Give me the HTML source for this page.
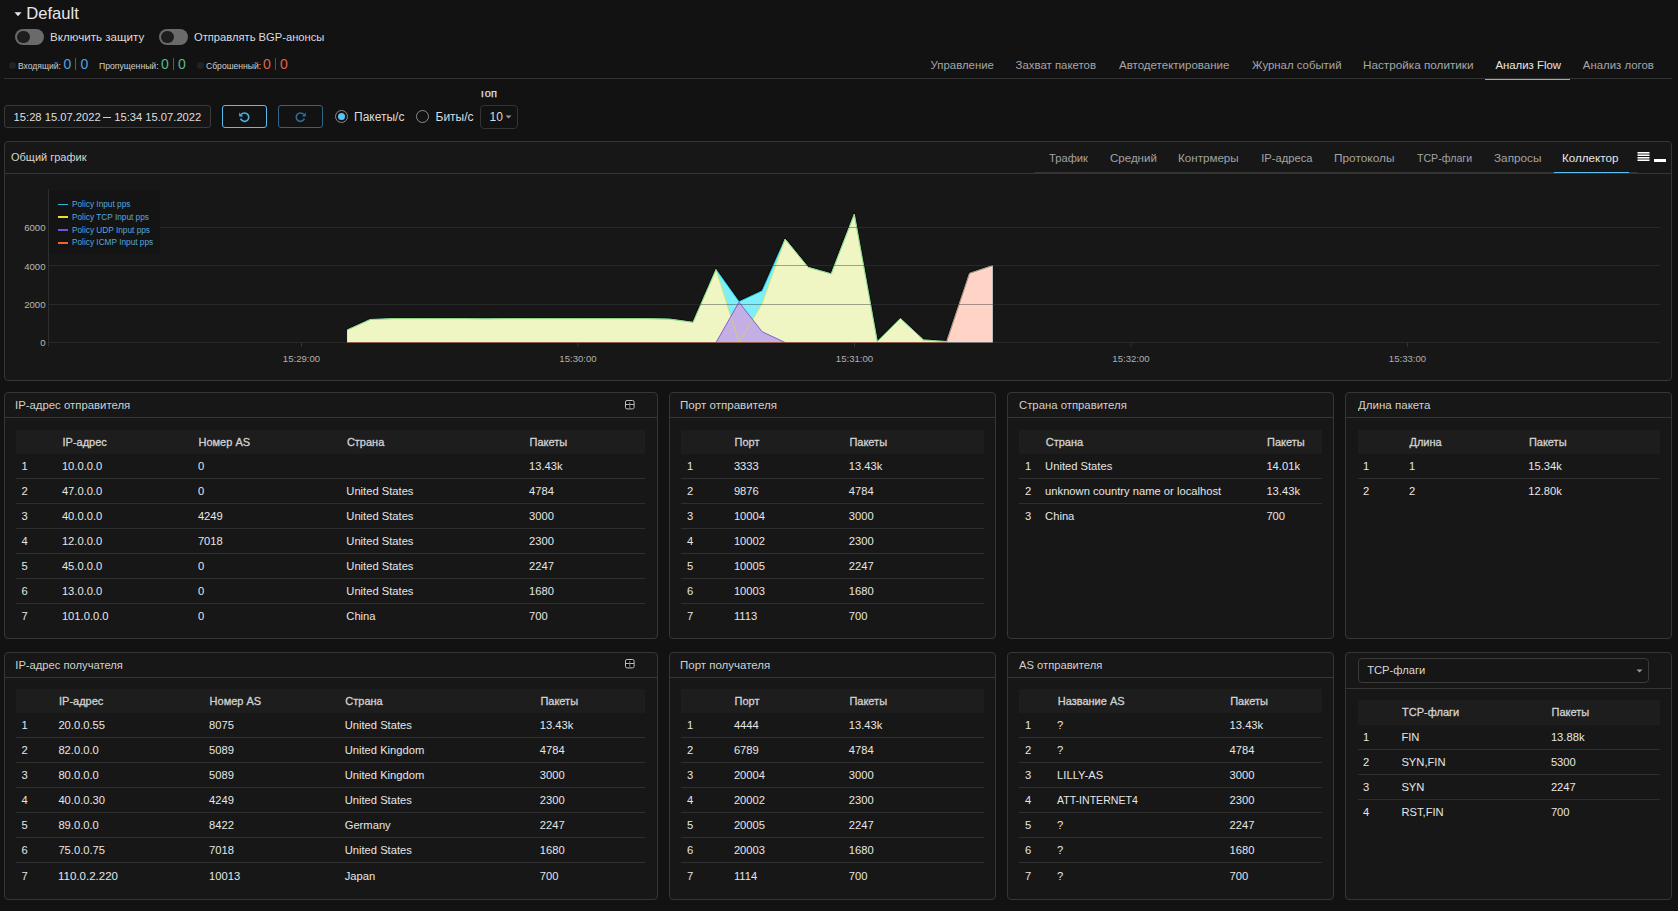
<!DOCTYPE html><html><head><meta charset="utf-8"><style>
html,body{margin:0;padding:0;}
body{width:1678px;height:911px;overflow:hidden;background:#121212;position:relative;font-family:"Liberation Sans",sans-serif;}
.t{position:absolute;white-space:nowrap;line-height:1;}
.r{position:absolute;box-sizing:border-box;}
</style></head><body>
<svg class="r" style="left:14px;top:11px;width:9px;height:7px" viewBox="0 0 9 7"><path d="M0.5 1.2 L7.5 1.2 L4 5.2 Z" fill="#e8e8e8"/></svg>
<div class="t" style="left:26.30px;top:6.21px;font-size:16.6px;color:#e8e8e8;font-weight:normal;">Default</div>
<div class="r" style="left:15px;top:29px;width:29px;height:16px;background:#6a6a6a;border-radius:8px;"></div>
<div class="r" style="left:17px;top:30.7px;width:12.7px;height:12.7px;background:#1e1e1e;border-radius:50%;"></div>
<div class="t" style="left:50.00px;top:31.07px;font-size:11.6px;color:#dcdcdc;font-weight:normal;">Включить защиту</div>
<div class="r" style="left:159px;top:29px;width:29px;height:16px;background:#6a6a6a;border-radius:8px;"></div>
<div class="r" style="left:161px;top:30.7px;width:12.7px;height:12.7px;background:#1e1e1e;border-radius:50%;"></div>
<div class="t" style="left:193.50px;top:31.07px;font-size:11.6px;color:#dcdcdc;font-weight:normal;transform:scaleX(0.9640);transform-origin:0 0;">Отправлять BGP-анонсы</div>
<div class="r" style="left:9px;top:62px;width:7px;height:7px;background:#222;border-radius:50%;"></div>
<div class="t" style="left:18.00px;top:61.03px;font-size:9.6px;color:#cfcfcf;font-weight:normal;transform:scaleX(.89);transform-origin:0 0;">Входящий:</div>
<div class="t" style="left:63.60px;top:57.37px;font-size:14px;color:#49a6e6;font-weight:normal;">0</div>
<div class="r" style="left:75px;top:58px;width:1px;height:12px;background:#3a6585;"></div>
<div class="t" style="left:80.40px;top:57.37px;font-size:14px;color:#49a6e6;font-weight:normal;">0</div>
<div class="t" style="left:99.00px;top:61.03px;font-size:9.6px;color:#cfcfcf;font-weight:normal;transform:scaleX(.9);transform-origin:0 0;">Пропущенный:</div>
<div class="t" style="left:161.00px;top:57.37px;font-size:14px;color:#5cba88;font-weight:normal;">0</div>
<div class="r" style="left:172.5px;top:58px;width:1px;height:12px;background:#3d6e54;"></div>
<div class="t" style="left:178.00px;top:57.37px;font-size:14px;color:#5cba88;font-weight:normal;">0</div>
<div class="r" style="left:197px;top:62px;width:7px;height:7px;background:#222;border-radius:50%;"></div>
<div class="t" style="left:206.00px;top:61.03px;font-size:9.6px;color:#cfcfcf;font-weight:normal;transform:scaleX(.895);transform-origin:0 0;">Сброшенный:</div>
<div class="t" style="left:263.00px;top:57.37px;font-size:14px;color:#e2614c;font-weight:normal;">0</div>
<div class="r" style="left:274.5px;top:58px;width:1px;height:12px;background:#7a4236;"></div>
<div class="t" style="left:280.00px;top:57.37px;font-size:14px;color:#e2614c;font-weight:normal;">0</div>
<div class="r" style="left:4px;top:78px;width:1668px;height:1px;background:#333;"></div>
<div class="t" style="left:930.60px;top:59.53px;font-size:11.4px;color:#a6a6a6;font-weight:normal;">Управление</div>
<div class="t" style="left:1015.60px;top:59.53px;font-size:11.4px;color:#a6a6a6;font-weight:normal;">Захват пакетов</div>
<div class="t" style="left:1119.00px;top:59.53px;font-size:11.4px;color:#a6a6a6;font-weight:normal;transform:scaleX(1.0110);transform-origin:0 0;">Автодетектирование</div>
<div class="t" style="left:1252.00px;top:59.53px;font-size:11.4px;color:#a6a6a6;font-weight:normal;">Журнал событий</div>
<div class="t" style="left:1363.00px;top:59.53px;font-size:11.4px;color:#a6a6a6;font-weight:normal;transform:scaleX(1.0290);transform-origin:0 0;">Настройка политики</div>
<div class="t" style="left:1495.40px;top:59.53px;font-size:11.4px;color:#e6e6e6;font-weight:normal;">Анализ Flow</div>
<div class="t" style="left:1582.80px;top:59.53px;font-size:11.4px;color:#a6a6a6;font-weight:normal;">Анализ логов</div>
<div class="r" style="left:1485px;top:79px;width:85px;height:1px;background:#5cbff0;"></div>
<div class="r" style="left:4px;top:105px;width:207px;height:23px;border:1px solid #3a3a3a;border-radius:3px;background:#161616;"></div>
<div class="t" style="left:13.60px;top:111.60px;font-size:11.2px;color:#dedede;font-weight:normal;">15:28 15.07.2022</div>
<div class="r" style="left:103px;top:117px;width:8px;height:1px;background:#d0d0d0;"></div>
<div class="t" style="left:114.20px;top:111.60px;font-size:11.2px;color:#dedede;font-weight:normal;">15:34 15.07.2022</div>
<div class="r" style="left:222px;top:105px;width:45px;height:23px;border:1px solid #5abdf0;border-radius:3px;"></div>
<div class="r" style="left:278px;top:105px;width:45px;height:23px;border:1px solid #2a6688;border-radius:3px;"></div>
<svg class="r" style="left:237px;top:110px;width:15px;height:14px" viewBox="0 0 15 14"><path d="M4.2 4.6 A4.2 4.2 0 1 1 3.6 8.6" fill="none" stroke="#4db0e4" stroke-width="1.6"/><path d="M2.2 2.6 L2.2 6.6 L6.2 6.6 Z" fill="#4db0e4"/></svg>
<svg class="r" style="left:293px;top:110px;width:15px;height:14px" viewBox="0 0 15 14"><path d="M10.8 4.6 A4.2 4.2 0 1 0 11.4 8.6" fill="none" stroke="#2a6f96" stroke-width="1.6"/><path d="M12.8 2.6 L12.8 6.6 L8.8 6.6 Z" fill="#2a6f96"/></svg>
<div class="r" style="left:335px;top:110px;width:13px;height:13px;border:1.3px solid #8a8a8a;border-radius:50%;"></div>
<div class="r" style="left:338px;top:113px;width:7px;height:7px;background:#5cc3f6;border-radius:50%;"></div>
<div class="t" style="left:354.00px;top:110.83px;font-size:12px;color:#dcdcdc;font-weight:normal;">Пакеты/с</div>
<div class="r" style="left:416px;top:110px;width:13px;height:13px;border:1.3px solid #8a8a8a;border-radius:50%;"></div>
<div class="t" style="left:435.50px;top:110.83px;font-size:12px;color:#dcdcdc;font-weight:normal;">Биты/с</div>
<div class="r" style="left:480px;top:105px;width:38px;height:24px;border:1px solid #333;border-radius:4px;"></div>
<div class="t" style="left:489.50px;top:110.83px;font-size:12px;color:#dcdcdc;font-weight:normal;">10</div>
<svg class="r" style="left:505px;top:115px;width:7px;height:4px" viewBox="0 0 7 4"><path d="M0.5 0.5 L6.5 0.5 L3.5 3.5 Z" fill="#9a9a9a"/></svg>
<div class="r" style="left:478px;top:91px;width:30px;height:8px;overflow:hidden;"><div class="t" style="left:1px;top:-3.5px;font-size:11px;color:#e0e0e0;-webkit-text-stroke:0.25px #e0e0e0;">Топ</div></div>
<div class="r" style="left:4px;top:141px;width:1668px;height:240px;border:1px solid #363636;border-radius:4px;background:#171717;"></div>
<div class="r" style="left:5px;top:173px;width:1666px;height:1px;background:#363636;"></div>
<div class="t" style="left:10.50px;top:151.70px;font-size:11.2px;color:#d6d6d6;font-weight:normal;transform:scaleX(0.9830);transform-origin:0 0;">Общий график</div>
<div class="t" style="left:1049.00px;top:153.30px;font-size:11.2px;color:#a3a3a3;font-weight:normal;">Трафик</div>
<div class="t" style="left:1110.20px;top:153.30px;font-size:11.2px;color:#a3a3a3;font-weight:normal;transform:scaleX(1.0300);transform-origin:0 0;">Средний</div>
<div class="t" style="left:1177.80px;top:153.30px;font-size:11.2px;color:#a3a3a3;font-weight:normal;transform:scaleX(1.0380);transform-origin:0 0;">Контрмеры</div>
<div class="t" style="left:1261.20px;top:153.30px;font-size:11.2px;color:#a3a3a3;font-weight:normal;">IP-адреса</div>
<div class="t" style="left:1334.20px;top:153.30px;font-size:11.2px;color:#a3a3a3;font-weight:normal;transform:scaleX(1.0600);transform-origin:0 0;">Протоколы</div>
<div class="t" style="left:1417.00px;top:153.30px;font-size:11.2px;color:#a3a3a3;font-weight:normal;transform:scaleX(0.9470);transform-origin:0 0;">TCP-флаги</div>
<div class="t" style="left:1494.00px;top:153.30px;font-size:11.2px;color:#a3a3a3;font-weight:normal;transform:scaleX(1.0520);transform-origin:0 0;">Запросы</div>
<div class="t" style="left:1562.20px;top:153.30px;font-size:11.2px;color:#e8e8e8;font-weight:normal;transform:scaleX(1.0400);transform-origin:0 0;">Коллектор</div>
<div class="r" style="left:1034px;top:172px;width:604px;height:1px;background:#333;"></div>
<div class="r" style="left:1554px;top:172px;width:75px;height:1px;background:#5cbff0;"></div>
<svg class="r" style="left:1637px;top:151px;width:13px;height:12px" viewBox="0 0 13 12"><rect x="0.5" y="1" width="12" height="1" fill="#fff"/><rect x="0.5" y="2" width="12" height="2" fill="#999"/><rect x="0.5" y="4" width="12" height="1" fill="#fff"/><rect x="0.5" y="6" width="12" height="1" fill="#fff"/><rect x="0.5" y="7" width="12" height="2" fill="#999"/><rect x="0.5" y="9" width="12" height="1" fill="#fff"/></svg>
<div class="r" style="left:1654px;top:159px;width:12px;height:3px;background:#fff;"></div>
<svg class="r" style="left:0;top:174px;width:1678px;height:206px" viewBox="0 174 1678 206">
<path d="M347.2 329.9 L370.2 319.5 L393.3 318.6 L416.4 318.6 L439.4 318.6 L462.4 318.6 L485.5 318.8 L508.5 318.6 L531.6 318.6 L554.6 318.6 L577.7 318.6 L600.8 318.6 L623.8 318.6 L646.9 318.6 L669.9 319.1 L693.0 322.3 L716.0 269.5 L739.0 301.7 L762.1 290.9 L785.1 239.0 L808.2 267.3 L831.2 273.8 L854.3 214.1 L877.3 341.5 L900.4 318.4 L923.5 339.9 L946.5 341.5 L969.5 273.3 L992.6 265.6" fill="none" stroke="#000" stroke-width="2.6" stroke-opacity="0.55" stroke-linejoin="round"/>
<path d="M347.2 342.5 L347.2 329.9 L370.2 319.5 L393.3 318.6 L416.4 318.6 L439.4 318.6 L462.4 318.6 L485.5 318.8 L508.5 318.6 L531.6 318.6 L554.6 318.6 L577.7 318.6 L600.8 318.6 L623.8 318.6 L646.9 318.6 L669.9 319.1 L693.0 322.3 L716.0 269.5 L739.0 301.7 L762.1 290.9 L785.1 239.0 L808.2 267.3 L831.2 273.8 L854.3 214.1 L877.3 341.5 L900.4 318.4 L923.5 339.9 L946.5 341.5 L969.5 273.3 L992.6 265.6 L992.6 342.5 Z" fill="#7deefa"/>
<path d="M347.2 342.5 L347.2 329.9 L370.2 319.5 L393.3 318.6 L416.4 318.6 L439.4 318.6 L462.4 318.6 L485.5 318.8 L508.5 318.6 L531.6 318.6 L554.6 318.6 L577.7 318.6 L600.8 318.6 L623.8 318.6 L646.9 318.6 L669.9 319.1 L693.0 322.3 L716.0 269.5 L739.0 342.5 L762.1 303.8 L785.1 239.0 L808.2 267.3 L831.2 273.8 L854.3 214.1 L877.3 341.5 L900.4 318.4 L923.5 339.9 L946.5 341.5 L946.5 342.5 Z" fill="#eff5c3"/>
<path d="M716.0 342.5 L716.0 342.5 L739.0 302.2 L762.1 331.7 L785.1 342.5 L785.1 342.5 Z" fill="#c3aee6"/>
<path d="M946.5 342.5 L946.5 342.5 L969.5 273.3 L992.6 265.6 L992.6 342.5 Z" fill="#ffd3c6"/>
<path d="M347.2 329.9 L370.2 319.5 L393.3 318.6 L416.4 318.6 L439.4 318.6 L462.4 318.6 L485.5 318.8 L508.5 318.6 L531.6 318.6 L554.6 318.6 L577.7 318.6 L600.8 318.6 L623.8 318.6 L646.9 318.6 L669.9 319.1 L693.0 322.3 L716.0 269.5 L739.0 301.7 L762.1 290.9 L785.1 239.0 L808.2 267.3 L831.2 273.8 L854.3 214.1 L877.3 341.5 L900.4 318.4 L923.5 339.9 L946.5 341.5 L969.5 273.3 L992.6 265.6" fill="none" stroke="#20d0f0" stroke-width="1" stroke-opacity="0.9" stroke-linejoin="round"/>
<path d="M347.2 329.9 L370.2 319.5 L393.3 318.6 L416.4 318.6 L439.4 318.6 L462.4 318.6 L485.5 318.8 L508.5 318.6 L531.6 318.6 L554.6 318.6 L577.7 318.6 L600.8 318.6 L623.8 318.6 L646.9 318.6 L669.9 319.1 L693.0 322.3 L716.0 269.5 L739.0 342.5 L762.1 303.8 L785.1 239.0 L808.2 267.3 L831.2 273.8 L854.3 214.1 L877.3 341.5 L900.4 318.4 L923.5 339.9 L946.5 341.5" fill="none" stroke="#e0e030" stroke-width="1" stroke-opacity="0.6" stroke-linejoin="round"/>
<path d="M716.0 342.5 L739.0 302.2 L762.1 331.7 L785.1 342.5" fill="none" stroke="#7a52d0" stroke-width="1" stroke-opacity="0.9" stroke-linejoin="round"/>
<path d="M347.2 342.5 L370.2 342.5 L393.3 342.5 L416.4 342.5 L439.4 342.5 L462.4 342.5 L485.5 342.5 L508.5 342.5 L531.6 342.5 L554.6 342.5 L577.7 342.5 L600.8 342.5 L623.8 342.5 L646.9 342.5 L669.9 342.5 L693.0 342.5 L716.0 342.5 L739.0 342.5 L762.1 342.5 L785.1 342.5 L808.2 342.5 L831.2 342.5 L854.3 342.5 L877.3 342.5 L900.4 342.5 L923.5 342.5 L946.5 342.5 L969.5 273.3 L992.6 265.6" fill="none" stroke="#e8704a" stroke-width="1" stroke-opacity="0.8" stroke-linejoin="round"/>
<line x1="49" x2="1660" y1="342.5" y2="342.5" stroke="rgba(60,60,60,0.46)" stroke-width="1"/>
<line x1="49" x2="1660" y1="304.5" y2="304.5" stroke="rgba(60,60,60,0.46)" stroke-width="1"/>
<line x1="49" x2="1660" y1="265.5" y2="265.5" stroke="rgba(60,60,60,0.46)" stroke-width="1"/>
<line x1="49" x2="1660" y1="227.5" y2="227.5" stroke="rgba(60,60,60,0.46)" stroke-width="1"/>
<line x1="48.5" x2="48.5" y1="189" y2="347" stroke="#2e2e2e" stroke-width="1"/>
<line x1="301.5" x2="301.5" y1="343" y2="347" stroke="#333" stroke-width="1"/>
<line x1="578" x2="578" y1="343" y2="347" stroke="#333" stroke-width="1"/>
<line x1="854.5" x2="854.5" y1="343" y2="347" stroke="#333" stroke-width="1"/>
<line x1="1131" x2="1131" y1="343" y2="347" stroke="#333" stroke-width="1"/>
<line x1="1407.5" x2="1407.5" y1="343" y2="347" stroke="#333" stroke-width="1"/>
<rect x="49" y="190" width="111" height="64" rx="3" fill="#141414"/>
</svg>
<div class="r" style="left:58px;top:203.75px;width:10px;height:1.5px;background:#2bb8d6"></div>
<div class="t" style="left:71.5px;top:200.16px;font-size:9.2px;color:#55a8de;transform:scaleX(.9);transform-origin:0 0;">Policy Input pps</div>
<div class="r" style="left:58px;top:216.10px;width:10px;height:2px;background:#e3e33a"></div>
<div class="t" style="left:71.5px;top:213.06px;font-size:9.2px;color:#55a8de;transform:scaleX(.9);transform-origin:0 0;">Policy TCP Input pps</div>
<div class="r" style="left:58px;top:228.90px;width:10px;height:2px;background:#7a4fd8"></div>
<div class="t" style="left:71.5px;top:225.76px;font-size:9.2px;color:#55a8de;transform:scaleX(.9);transform-origin:0 0;">Policy UDP Input pps</div>
<div class="r" style="left:58px;top:242.00px;width:10px;height:2px;background:#f2622c"></div>
<div class="t" style="left:71.5px;top:237.96px;font-size:9.2px;color:#55a8de;transform:scaleX(.9);transform-origin:0 0;">Policy ICMP Input pps</div>
<div class="t" style="right:1632.5px;top:223.03px;font-size:9.6px;color:#b8b8b8;">6000</div>
<div class="t" style="right:1632.5px;top:261.63px;font-size:9.6px;color:#b8b8b8;">4000</div>
<div class="t" style="right:1632.5px;top:300.03px;font-size:9.6px;color:#b8b8b8;">2000</div>
<div class="t" style="right:1632.5px;top:338.13px;font-size:9.6px;color:#b8b8b8;">0</div>
<div class="t" style="left:271.5px;width:60px;text-align:center;top:354.03px;font-size:9.6px;color:#b0b0b0;">15:29:00</div>
<div class="t" style="left:548px;width:60px;text-align:center;top:354.03px;font-size:9.6px;color:#b0b0b0;">15:30:00</div>
<div class="t" style="left:824.5px;width:60px;text-align:center;top:354.03px;font-size:9.6px;color:#b0b0b0;">15:31:00</div>
<div class="t" style="left:1101px;width:60px;text-align:center;top:354.03px;font-size:9.6px;color:#b0b0b0;">15:32:00</div>
<div class="t" style="left:1377.5px;width:60px;text-align:center;top:354.03px;font-size:9.6px;color:#b0b0b0;">15:33:00</div>
<div class="r" style="left:4px;top:392px;width:654px;height:247px;border:1px solid #363636;border-radius:4px;background:#171717;"></div>
<div class="r" style="left:5px;top:417px;width:652px;height:1px;background:#363636;"></div>
<div class="t" style="left:15.30px;top:399.70px;font-size:11.2px;color:#d0d0d0;font-weight:normal;transform:scaleX(1.0160);transform-origin:0 0;">IP-адрес отправителя</div>
<svg class="r" style="left:625px;top:400px;width:10px;height:10px" viewBox="0 0 10 10"><rect x="0.5" y="0.5" width="8.6" height="8.4" rx="1.6" fill="#080808" stroke="#c4c4c4" stroke-width="1"/><path d="M1 4.5 H9" stroke="#bdbdbd" stroke-width="1"/><path d="M4.8 2 V8" stroke="#8a8a8a" stroke-width="1"/></svg>
<div class="r" style="left:16px;top:430px;width:629px;height:24px;background:#1d1d1d;"></div>
<div class="t" style="left:62.50px;top:436.86px;font-size:11px;color:#d2d2d2;font-weight:normal;-webkit-text-stroke:0.3px #d2d2d2;">IP-адрес</div>
<div class="t" style="left:198.50px;top:436.86px;font-size:11px;color:#d2d2d2;font-weight:normal;-webkit-text-stroke:0.3px #d2d2d2;">Номер AS</div>
<div class="t" style="left:346.90px;top:436.86px;font-size:11px;color:#d2d2d2;font-weight:normal;-webkit-text-stroke:0.3px #d2d2d2;">Страна</div>
<div class="t" style="left:529.60px;top:436.86px;font-size:11px;color:#d2d2d2;font-weight:normal;-webkit-text-stroke:0.3px #d2d2d2;">Пакеты</div>
<div class="t" style="left:21.40px;top:460.70px;font-size:11.2px;color:#e6e6e6;font-weight:normal;">1</div>
<div class="t" style="left:61.90px;top:460.70px;font-size:11.2px;color:#e6e6e6;font-weight:normal;">10.0.0.0</div>
<div class="t" style="left:197.90px;top:460.70px;font-size:11.2px;color:#e6e6e6;font-weight:normal;">0</div>
<div class="t" style="left:346.30px;top:460.70px;font-size:11.2px;color:#e6e6e6;font-weight:normal;"></div>
<div class="t" style="left:529.00px;top:460.70px;font-size:11.2px;color:#e6e6e6;font-weight:normal;">13.43k</div>
<div class="r" style="left:16px;top:478px;width:629px;height:1px;background:#2e2e2e;"></div>
<div class="t" style="left:21.40px;top:485.70px;font-size:11.2px;color:#e6e6e6;font-weight:normal;">2</div>
<div class="t" style="left:61.90px;top:485.70px;font-size:11.2px;color:#e6e6e6;font-weight:normal;">47.0.0.0</div>
<div class="t" style="left:197.90px;top:485.70px;font-size:11.2px;color:#e6e6e6;font-weight:normal;">0</div>
<div class="t" style="left:346.30px;top:485.70px;font-size:11.2px;color:#e6e6e6;font-weight:normal;">United States</div>
<div class="t" style="left:529.00px;top:485.70px;font-size:11.2px;color:#e6e6e6;font-weight:normal;">4784</div>
<div class="r" style="left:16px;top:503px;width:629px;height:1px;background:#2e2e2e;"></div>
<div class="t" style="left:21.40px;top:510.70px;font-size:11.2px;color:#e6e6e6;font-weight:normal;">3</div>
<div class="t" style="left:61.90px;top:510.70px;font-size:11.2px;color:#e6e6e6;font-weight:normal;">40.0.0.0</div>
<div class="t" style="left:197.90px;top:510.70px;font-size:11.2px;color:#e6e6e6;font-weight:normal;">4249</div>
<div class="t" style="left:346.30px;top:510.70px;font-size:11.2px;color:#e6e6e6;font-weight:normal;">United States</div>
<div class="t" style="left:529.00px;top:510.70px;font-size:11.2px;color:#e6e6e6;font-weight:normal;">3000</div>
<div class="r" style="left:16px;top:528px;width:629px;height:1px;background:#2e2e2e;"></div>
<div class="t" style="left:21.40px;top:535.70px;font-size:11.2px;color:#e6e6e6;font-weight:normal;">4</div>
<div class="t" style="left:61.90px;top:535.70px;font-size:11.2px;color:#e6e6e6;font-weight:normal;">12.0.0.0</div>
<div class="t" style="left:197.90px;top:535.70px;font-size:11.2px;color:#e6e6e6;font-weight:normal;">7018</div>
<div class="t" style="left:346.30px;top:535.70px;font-size:11.2px;color:#e6e6e6;font-weight:normal;">United States</div>
<div class="t" style="left:529.00px;top:535.70px;font-size:11.2px;color:#e6e6e6;font-weight:normal;">2300</div>
<div class="r" style="left:16px;top:553px;width:629px;height:1px;background:#2e2e2e;"></div>
<div class="t" style="left:21.40px;top:560.70px;font-size:11.2px;color:#e6e6e6;font-weight:normal;">5</div>
<div class="t" style="left:61.90px;top:560.70px;font-size:11.2px;color:#e6e6e6;font-weight:normal;">45.0.0.0</div>
<div class="t" style="left:197.90px;top:560.70px;font-size:11.2px;color:#e6e6e6;font-weight:normal;">0</div>
<div class="t" style="left:346.30px;top:560.70px;font-size:11.2px;color:#e6e6e6;font-weight:normal;">United States</div>
<div class="t" style="left:529.00px;top:560.70px;font-size:11.2px;color:#e6e6e6;font-weight:normal;">2247</div>
<div class="r" style="left:16px;top:578px;width:629px;height:1px;background:#2e2e2e;"></div>
<div class="t" style="left:21.40px;top:585.70px;font-size:11.2px;color:#e6e6e6;font-weight:normal;">6</div>
<div class="t" style="left:61.90px;top:585.70px;font-size:11.2px;color:#e6e6e6;font-weight:normal;">13.0.0.0</div>
<div class="t" style="left:197.90px;top:585.70px;font-size:11.2px;color:#e6e6e6;font-weight:normal;">0</div>
<div class="t" style="left:346.30px;top:585.70px;font-size:11.2px;color:#e6e6e6;font-weight:normal;">United States</div>
<div class="t" style="left:529.00px;top:585.70px;font-size:11.2px;color:#e6e6e6;font-weight:normal;">1680</div>
<div class="r" style="left:16px;top:603px;width:629px;height:1px;background:#2e2e2e;"></div>
<div class="t" style="left:21.40px;top:610.70px;font-size:11.2px;color:#e6e6e6;font-weight:normal;">7</div>
<div class="t" style="left:61.90px;top:610.70px;font-size:11.2px;color:#e6e6e6;font-weight:normal;">101.0.0.0</div>
<div class="t" style="left:197.90px;top:610.70px;font-size:11.2px;color:#e6e6e6;font-weight:normal;">0</div>
<div class="t" style="left:346.30px;top:610.70px;font-size:11.2px;color:#e6e6e6;font-weight:normal;">China</div>
<div class="t" style="left:529.00px;top:610.70px;font-size:11.2px;color:#e6e6e6;font-weight:normal;">700</div>
<div class="r" style="left:669px;top:392px;width:327px;height:247px;border:1px solid #363636;border-radius:4px;background:#171717;"></div>
<div class="r" style="left:670px;top:417px;width:325px;height:1px;background:#363636;"></div>
<div class="t" style="left:680.30px;top:399.70px;font-size:11.2px;color:#d0d0d0;font-weight:normal;transform:scaleX(1.0350);transform-origin:0 0;">Порт отправителя</div>
<div class="r" style="left:681px;top:430px;width:303px;height:24px;background:#1d1d1d;"></div>
<div class="t" style="left:734.50px;top:436.86px;font-size:11px;color:#d2d2d2;font-weight:normal;-webkit-text-stroke:0.3px #d2d2d2;">Порт</div>
<div class="t" style="left:849.40px;top:436.86px;font-size:11px;color:#d2d2d2;font-weight:normal;-webkit-text-stroke:0.3px #d2d2d2;">Пакеты</div>
<div class="t" style="left:687.10px;top:460.70px;font-size:11.2px;color:#e6e6e6;font-weight:normal;">1</div>
<div class="t" style="left:733.90px;top:460.70px;font-size:11.2px;color:#e6e6e6;font-weight:normal;">3333</div>
<div class="t" style="left:848.80px;top:460.70px;font-size:11.2px;color:#e6e6e6;font-weight:normal;">13.43k</div>
<div class="r" style="left:681px;top:478px;width:303px;height:1px;background:#2e2e2e;"></div>
<div class="t" style="left:687.10px;top:485.70px;font-size:11.2px;color:#e6e6e6;font-weight:normal;">2</div>
<div class="t" style="left:733.90px;top:485.70px;font-size:11.2px;color:#e6e6e6;font-weight:normal;">9876</div>
<div class="t" style="left:848.80px;top:485.70px;font-size:11.2px;color:#e6e6e6;font-weight:normal;">4784</div>
<div class="r" style="left:681px;top:503px;width:303px;height:1px;background:#2e2e2e;"></div>
<div class="t" style="left:687.10px;top:510.70px;font-size:11.2px;color:#e6e6e6;font-weight:normal;">3</div>
<div class="t" style="left:733.90px;top:510.70px;font-size:11.2px;color:#e6e6e6;font-weight:normal;">10004</div>
<div class="t" style="left:848.80px;top:510.70px;font-size:11.2px;color:#e6e6e6;font-weight:normal;">3000</div>
<div class="r" style="left:681px;top:528px;width:303px;height:1px;background:#2e2e2e;"></div>
<div class="t" style="left:687.10px;top:535.70px;font-size:11.2px;color:#e6e6e6;font-weight:normal;">4</div>
<div class="t" style="left:733.90px;top:535.70px;font-size:11.2px;color:#e6e6e6;font-weight:normal;">10002</div>
<div class="t" style="left:848.80px;top:535.70px;font-size:11.2px;color:#e6e6e6;font-weight:normal;">2300</div>
<div class="r" style="left:681px;top:553px;width:303px;height:1px;background:#2e2e2e;"></div>
<div class="t" style="left:687.10px;top:560.70px;font-size:11.2px;color:#e6e6e6;font-weight:normal;">5</div>
<div class="t" style="left:733.90px;top:560.70px;font-size:11.2px;color:#e6e6e6;font-weight:normal;">10005</div>
<div class="t" style="left:848.80px;top:560.70px;font-size:11.2px;color:#e6e6e6;font-weight:normal;">2247</div>
<div class="r" style="left:681px;top:578px;width:303px;height:1px;background:#2e2e2e;"></div>
<div class="t" style="left:687.10px;top:585.70px;font-size:11.2px;color:#e6e6e6;font-weight:normal;">6</div>
<div class="t" style="left:733.90px;top:585.70px;font-size:11.2px;color:#e6e6e6;font-weight:normal;">10003</div>
<div class="t" style="left:848.80px;top:585.70px;font-size:11.2px;color:#e6e6e6;font-weight:normal;">1680</div>
<div class="r" style="left:681px;top:603px;width:303px;height:1px;background:#2e2e2e;"></div>
<div class="t" style="left:687.10px;top:610.70px;font-size:11.2px;color:#e6e6e6;font-weight:normal;">7</div>
<div class="t" style="left:733.90px;top:610.70px;font-size:11.2px;color:#e6e6e6;font-weight:normal;">1113</div>
<div class="t" style="left:848.80px;top:610.70px;font-size:11.2px;color:#e6e6e6;font-weight:normal;">700</div>
<div class="r" style="left:1007px;top:392px;width:327px;height:247px;border:1px solid #363636;border-radius:4px;background:#171717;"></div>
<div class="r" style="left:1008px;top:417px;width:325px;height:1px;background:#363636;"></div>
<div class="t" style="left:1019.00px;top:399.70px;font-size:11.2px;color:#d0d0d0;font-weight:normal;transform:scaleX(1.0130);transform-origin:0 0;">Страна отправителя</div>
<div class="r" style="left:1019px;top:430px;width:303px;height:24px;background:#1d1d1d;"></div>
<div class="t" style="left:1045.70px;top:436.86px;font-size:11px;color:#d2d2d2;font-weight:normal;-webkit-text-stroke:0.3px #d2d2d2;">Страна</div>
<div class="t" style="left:1267.00px;top:436.86px;font-size:11px;color:#d2d2d2;font-weight:normal;-webkit-text-stroke:0.3px #d2d2d2;">Пакеты</div>
<div class="t" style="left:1025.00px;top:460.70px;font-size:11.2px;color:#e6e6e6;font-weight:normal;">1</div>
<div class="t" style="left:1045.10px;top:460.70px;font-size:11.2px;color:#e6e6e6;font-weight:normal;">United States</div>
<div class="t" style="left:1266.40px;top:460.70px;font-size:11.2px;color:#e6e6e6;font-weight:normal;">14.01k</div>
<div class="r" style="left:1019px;top:478px;width:303px;height:1px;background:#2e2e2e;"></div>
<div class="t" style="left:1025.00px;top:485.70px;font-size:11.2px;color:#e6e6e6;font-weight:normal;">2</div>
<div class="t" style="left:1045.10px;top:485.70px;font-size:11.2px;color:#e6e6e6;font-weight:normal;">unknown country name or localhost</div>
<div class="t" style="left:1266.40px;top:485.70px;font-size:11.2px;color:#e6e6e6;font-weight:normal;">13.43k</div>
<div class="r" style="left:1019px;top:503px;width:303px;height:1px;background:#2e2e2e;"></div>
<div class="t" style="left:1025.00px;top:510.70px;font-size:11.2px;color:#e6e6e6;font-weight:normal;">3</div>
<div class="t" style="left:1045.10px;top:510.70px;font-size:11.2px;color:#e6e6e6;font-weight:normal;">China</div>
<div class="t" style="left:1266.40px;top:510.70px;font-size:11.2px;color:#e6e6e6;font-weight:normal;">700</div>
<div class="r" style="left:1345px;top:392px;width:327px;height:247px;border:1px solid #363636;border-radius:4px;background:#171717;"></div>
<div class="r" style="left:1346px;top:417px;width:325px;height:1px;background:#363636;"></div>
<div class="t" style="left:1358.20px;top:399.70px;font-size:11.2px;color:#d0d0d0;font-weight:normal;transform:scaleX(1.0310);transform-origin:0 0;">Длина пакета</div>
<div class="r" style="left:1358px;top:430px;width:302px;height:24px;background:#1d1d1d;"></div>
<div class="t" style="left:1409.50px;top:436.86px;font-size:11px;color:#d2d2d2;font-weight:normal;-webkit-text-stroke:0.3px #d2d2d2;">Длина</div>
<div class="t" style="left:1528.90px;top:436.86px;font-size:11px;color:#d2d2d2;font-weight:normal;-webkit-text-stroke:0.3px #d2d2d2;">Пакеты</div>
<div class="t" style="left:1363.10px;top:460.70px;font-size:11.2px;color:#e6e6e6;font-weight:normal;">1</div>
<div class="t" style="left:1408.90px;top:460.70px;font-size:11.2px;color:#e6e6e6;font-weight:normal;">1</div>
<div class="t" style="left:1528.30px;top:460.70px;font-size:11.2px;color:#e6e6e6;font-weight:normal;">15.34k</div>
<div class="r" style="left:1358px;top:478px;width:302px;height:1px;background:#2e2e2e;"></div>
<div class="t" style="left:1363.10px;top:485.70px;font-size:11.2px;color:#e6e6e6;font-weight:normal;">2</div>
<div class="t" style="left:1408.90px;top:485.70px;font-size:11.2px;color:#e6e6e6;font-weight:normal;">2</div>
<div class="t" style="left:1528.30px;top:485.70px;font-size:11.2px;color:#e6e6e6;font-weight:normal;">12.80k</div>
<div class="r" style="left:4px;top:652px;width:654px;height:248px;border:1px solid #363636;border-radius:4px;background:#171717;"></div>
<div class="r" style="left:5px;top:677px;width:652px;height:1px;background:#363636;"></div>
<div class="t" style="left:15.30px;top:659.70px;font-size:11.2px;color:#d0d0d0;font-weight:normal;">IP-адрес получателя</div>
<svg class="r" style="left:625px;top:659px;width:10px;height:10px" viewBox="0 0 10 10"><rect x="0.5" y="0.5" width="8.6" height="8.4" rx="1.6" fill="#080808" stroke="#c4c4c4" stroke-width="1"/><path d="M1 4.5 H9" stroke="#bdbdbd" stroke-width="1"/><path d="M4.8 2 V8" stroke="#8a8a8a" stroke-width="1"/></svg>
<div class="r" style="left:16px;top:689px;width:629px;height:24px;background:#1d1d1d;"></div>
<div class="t" style="left:59.00px;top:695.86px;font-size:11px;color:#d2d2d2;font-weight:normal;-webkit-text-stroke:0.3px #d2d2d2;">IP-адрес</div>
<div class="t" style="left:209.60px;top:695.86px;font-size:11px;color:#d2d2d2;font-weight:normal;-webkit-text-stroke:0.3px #d2d2d2;">Номер AS</div>
<div class="t" style="left:345.30px;top:695.86px;font-size:11px;color:#d2d2d2;font-weight:normal;-webkit-text-stroke:0.3px #d2d2d2;">Страна</div>
<div class="t" style="left:540.40px;top:695.86px;font-size:11px;color:#d2d2d2;font-weight:normal;-webkit-text-stroke:0.3px #d2d2d2;">Пакеты</div>
<div class="t" style="left:21.40px;top:719.70px;font-size:11.2px;color:#e6e6e6;font-weight:normal;">1</div>
<div class="t" style="left:58.40px;top:719.70px;font-size:11.2px;color:#e6e6e6;font-weight:normal;">20.0.0.55</div>
<div class="t" style="left:209.00px;top:719.70px;font-size:11.2px;color:#e6e6e6;font-weight:normal;">8075</div>
<div class="t" style="left:344.70px;top:719.70px;font-size:11.2px;color:#e6e6e6;font-weight:normal;">United States</div>
<div class="t" style="left:539.80px;top:719.70px;font-size:11.2px;color:#e6e6e6;font-weight:normal;">13.43k</div>
<div class="r" style="left:16px;top:737px;width:629px;height:1px;background:#2e2e2e;"></div>
<div class="t" style="left:21.40px;top:744.70px;font-size:11.2px;color:#e6e6e6;font-weight:normal;">2</div>
<div class="t" style="left:58.40px;top:744.70px;font-size:11.2px;color:#e6e6e6;font-weight:normal;">82.0.0.0</div>
<div class="t" style="left:209.00px;top:744.70px;font-size:11.2px;color:#e6e6e6;font-weight:normal;">5089</div>
<div class="t" style="left:344.70px;top:744.70px;font-size:11.2px;color:#e6e6e6;font-weight:normal;">United Kingdom</div>
<div class="t" style="left:539.80px;top:744.70px;font-size:11.2px;color:#e6e6e6;font-weight:normal;">4784</div>
<div class="r" style="left:16px;top:762px;width:629px;height:1px;background:#2e2e2e;"></div>
<div class="t" style="left:21.40px;top:769.70px;font-size:11.2px;color:#e6e6e6;font-weight:normal;">3</div>
<div class="t" style="left:58.40px;top:769.70px;font-size:11.2px;color:#e6e6e6;font-weight:normal;">80.0.0.0</div>
<div class="t" style="left:209.00px;top:769.70px;font-size:11.2px;color:#e6e6e6;font-weight:normal;">5089</div>
<div class="t" style="left:344.70px;top:769.70px;font-size:11.2px;color:#e6e6e6;font-weight:normal;">United Kingdom</div>
<div class="t" style="left:539.80px;top:769.70px;font-size:11.2px;color:#e6e6e6;font-weight:normal;">3000</div>
<div class="r" style="left:16px;top:787px;width:629px;height:1px;background:#2e2e2e;"></div>
<div class="t" style="left:21.40px;top:794.70px;font-size:11.2px;color:#e6e6e6;font-weight:normal;">4</div>
<div class="t" style="left:58.40px;top:794.70px;font-size:11.2px;color:#e6e6e6;font-weight:normal;">40.0.0.30</div>
<div class="t" style="left:209.00px;top:794.70px;font-size:11.2px;color:#e6e6e6;font-weight:normal;">4249</div>
<div class="t" style="left:344.70px;top:794.70px;font-size:11.2px;color:#e6e6e6;font-weight:normal;">United States</div>
<div class="t" style="left:539.80px;top:794.70px;font-size:11.2px;color:#e6e6e6;font-weight:normal;">2300</div>
<div class="r" style="left:16px;top:812px;width:629px;height:1px;background:#2e2e2e;"></div>
<div class="t" style="left:21.40px;top:819.70px;font-size:11.2px;color:#e6e6e6;font-weight:normal;">5</div>
<div class="t" style="left:58.40px;top:819.70px;font-size:11.2px;color:#e6e6e6;font-weight:normal;">89.0.0.0</div>
<div class="t" style="left:209.00px;top:819.70px;font-size:11.2px;color:#e6e6e6;font-weight:normal;">8422</div>
<div class="t" style="left:344.70px;top:819.70px;font-size:11.2px;color:#e6e6e6;font-weight:normal;">Germany</div>
<div class="t" style="left:539.80px;top:819.70px;font-size:11.2px;color:#e6e6e6;font-weight:normal;">2247</div>
<div class="r" style="left:16px;top:837px;width:629px;height:1px;background:#2e2e2e;"></div>
<div class="t" style="left:21.40px;top:844.70px;font-size:11.2px;color:#e6e6e6;font-weight:normal;">6</div>
<div class="t" style="left:58.40px;top:844.70px;font-size:11.2px;color:#e6e6e6;font-weight:normal;">75.0.0.75</div>
<div class="t" style="left:209.00px;top:844.70px;font-size:11.2px;color:#e6e6e6;font-weight:normal;">7018</div>
<div class="t" style="left:344.70px;top:844.70px;font-size:11.2px;color:#e6e6e6;font-weight:normal;">United States</div>
<div class="t" style="left:539.80px;top:844.70px;font-size:11.2px;color:#e6e6e6;font-weight:normal;">1680</div>
<div class="r" style="left:16px;top:862px;width:629px;height:1px;background:#2e2e2e;"></div>
<div class="t" style="left:21.40px;top:870.70px;font-size:11.2px;color:#e6e6e6;font-weight:normal;">7</div>
<div class="t" style="left:58.40px;top:870.70px;font-size:11.2px;color:#e6e6e6;font-weight:normal;transform:scaleX(1.0300);transform-origin:0 0;">110.0.2.220</div>
<div class="t" style="left:209.00px;top:870.70px;font-size:11.2px;color:#e6e6e6;font-weight:normal;">10013</div>
<div class="t" style="left:344.70px;top:870.70px;font-size:11.2px;color:#e6e6e6;font-weight:normal;">Japan</div>
<div class="t" style="left:539.80px;top:870.70px;font-size:11.2px;color:#e6e6e6;font-weight:normal;">700</div>
<div class="r" style="left:669px;top:652px;width:327px;height:248px;border:1px solid #363636;border-radius:4px;background:#171717;"></div>
<div class="r" style="left:670px;top:677px;width:325px;height:1px;background:#363636;"></div>
<div class="t" style="left:680.30px;top:659.70px;font-size:11.2px;color:#d0d0d0;font-weight:normal;transform:scaleX(1.0270);transform-origin:0 0;">Порт получателя</div>
<div class="r" style="left:681px;top:689px;width:303px;height:24px;background:#1d1d1d;"></div>
<div class="t" style="left:734.50px;top:695.86px;font-size:11px;color:#d2d2d2;font-weight:normal;-webkit-text-stroke:0.3px #d2d2d2;">Порт</div>
<div class="t" style="left:849.40px;top:695.86px;font-size:11px;color:#d2d2d2;font-weight:normal;-webkit-text-stroke:0.3px #d2d2d2;">Пакеты</div>
<div class="t" style="left:687.10px;top:719.70px;font-size:11.2px;color:#e6e6e6;font-weight:normal;">1</div>
<div class="t" style="left:733.90px;top:719.70px;font-size:11.2px;color:#e6e6e6;font-weight:normal;">4444</div>
<div class="t" style="left:848.80px;top:719.70px;font-size:11.2px;color:#e6e6e6;font-weight:normal;">13.43k</div>
<div class="r" style="left:681px;top:737px;width:303px;height:1px;background:#2e2e2e;"></div>
<div class="t" style="left:687.10px;top:744.70px;font-size:11.2px;color:#e6e6e6;font-weight:normal;">2</div>
<div class="t" style="left:733.90px;top:744.70px;font-size:11.2px;color:#e6e6e6;font-weight:normal;">6789</div>
<div class="t" style="left:848.80px;top:744.70px;font-size:11.2px;color:#e6e6e6;font-weight:normal;">4784</div>
<div class="r" style="left:681px;top:762px;width:303px;height:1px;background:#2e2e2e;"></div>
<div class="t" style="left:687.10px;top:769.70px;font-size:11.2px;color:#e6e6e6;font-weight:normal;">3</div>
<div class="t" style="left:733.90px;top:769.70px;font-size:11.2px;color:#e6e6e6;font-weight:normal;">20004</div>
<div class="t" style="left:848.80px;top:769.70px;font-size:11.2px;color:#e6e6e6;font-weight:normal;">3000</div>
<div class="r" style="left:681px;top:787px;width:303px;height:1px;background:#2e2e2e;"></div>
<div class="t" style="left:687.10px;top:794.70px;font-size:11.2px;color:#e6e6e6;font-weight:normal;">4</div>
<div class="t" style="left:733.90px;top:794.70px;font-size:11.2px;color:#e6e6e6;font-weight:normal;">20002</div>
<div class="t" style="left:848.80px;top:794.70px;font-size:11.2px;color:#e6e6e6;font-weight:normal;">2300</div>
<div class="r" style="left:681px;top:812px;width:303px;height:1px;background:#2e2e2e;"></div>
<div class="t" style="left:687.10px;top:819.70px;font-size:11.2px;color:#e6e6e6;font-weight:normal;">5</div>
<div class="t" style="left:733.90px;top:819.70px;font-size:11.2px;color:#e6e6e6;font-weight:normal;">20005</div>
<div class="t" style="left:848.80px;top:819.70px;font-size:11.2px;color:#e6e6e6;font-weight:normal;">2247</div>
<div class="r" style="left:681px;top:837px;width:303px;height:1px;background:#2e2e2e;"></div>
<div class="t" style="left:687.10px;top:844.70px;font-size:11.2px;color:#e6e6e6;font-weight:normal;">6</div>
<div class="t" style="left:733.90px;top:844.70px;font-size:11.2px;color:#e6e6e6;font-weight:normal;">20003</div>
<div class="t" style="left:848.80px;top:844.70px;font-size:11.2px;color:#e6e6e6;font-weight:normal;">1680</div>
<div class="r" style="left:681px;top:862px;width:303px;height:1px;background:#2e2e2e;"></div>
<div class="t" style="left:687.10px;top:870.70px;font-size:11.2px;color:#e6e6e6;font-weight:normal;">7</div>
<div class="t" style="left:733.90px;top:870.70px;font-size:11.2px;color:#e6e6e6;font-weight:normal;">1114</div>
<div class="t" style="left:848.80px;top:870.70px;font-size:11.2px;color:#e6e6e6;font-weight:normal;">700</div>
<div class="r" style="left:1007px;top:652px;width:327px;height:248px;border:1px solid #363636;border-radius:4px;background:#171717;"></div>
<div class="r" style="left:1008px;top:677px;width:325px;height:1px;background:#363636;"></div>
<div class="t" style="left:1019.00px;top:659.70px;font-size:11.2px;color:#d0d0d0;font-weight:normal;">AS отправителя</div>
<div class="r" style="left:1019px;top:689px;width:303px;height:24px;background:#1d1d1d;"></div>
<div class="t" style="left:1057.70px;top:695.86px;font-size:11px;color:#d2d2d2;font-weight:normal;-webkit-text-stroke:0.3px #d2d2d2;">Название AS</div>
<div class="t" style="left:1230.20px;top:695.86px;font-size:11px;color:#d2d2d2;font-weight:normal;-webkit-text-stroke:0.3px #d2d2d2;">Пакеты</div>
<div class="t" style="left:1025.00px;top:719.70px;font-size:11.2px;color:#e6e6e6;font-weight:normal;">1</div>
<div class="t" style="left:1057.10px;top:719.70px;font-size:11.2px;color:#e6e6e6;font-weight:normal;">?</div>
<div class="t" style="left:1229.60px;top:719.70px;font-size:11.2px;color:#e6e6e6;font-weight:normal;">13.43k</div>
<div class="r" style="left:1019px;top:737px;width:303px;height:1px;background:#2e2e2e;"></div>
<div class="t" style="left:1025.00px;top:744.70px;font-size:11.2px;color:#e6e6e6;font-weight:normal;">2</div>
<div class="t" style="left:1057.10px;top:744.70px;font-size:11.2px;color:#e6e6e6;font-weight:normal;">?</div>
<div class="t" style="left:1229.60px;top:744.70px;font-size:11.2px;color:#e6e6e6;font-weight:normal;">4784</div>
<div class="r" style="left:1019px;top:762px;width:303px;height:1px;background:#2e2e2e;"></div>
<div class="t" style="left:1025.00px;top:769.70px;font-size:11.2px;color:#e6e6e6;font-weight:normal;">3</div>
<div class="t" style="left:1057.10px;top:769.70px;font-size:11.2px;color:#e6e6e6;font-weight:normal;">LILLY-AS</div>
<div class="t" style="left:1229.60px;top:769.70px;font-size:11.2px;color:#e6e6e6;font-weight:normal;">3000</div>
<div class="r" style="left:1019px;top:787px;width:303px;height:1px;background:#2e2e2e;"></div>
<div class="t" style="left:1025.00px;top:794.70px;font-size:11.2px;color:#e6e6e6;font-weight:normal;">4</div>
<div class="t" style="left:1057.10px;top:794.70px;font-size:11.2px;color:#e6e6e6;font-weight:normal;transform:scaleX(0.9440);transform-origin:0 0;">ATT-INTERNET4</div>
<div class="t" style="left:1229.60px;top:794.70px;font-size:11.2px;color:#e6e6e6;font-weight:normal;">2300</div>
<div class="r" style="left:1019px;top:812px;width:303px;height:1px;background:#2e2e2e;"></div>
<div class="t" style="left:1025.00px;top:819.70px;font-size:11.2px;color:#e6e6e6;font-weight:normal;">5</div>
<div class="t" style="left:1057.10px;top:819.70px;font-size:11.2px;color:#e6e6e6;font-weight:normal;">?</div>
<div class="t" style="left:1229.60px;top:819.70px;font-size:11.2px;color:#e6e6e6;font-weight:normal;">2247</div>
<div class="r" style="left:1019px;top:837px;width:303px;height:1px;background:#2e2e2e;"></div>
<div class="t" style="left:1025.00px;top:844.70px;font-size:11.2px;color:#e6e6e6;font-weight:normal;">6</div>
<div class="t" style="left:1057.10px;top:844.70px;font-size:11.2px;color:#e6e6e6;font-weight:normal;">?</div>
<div class="t" style="left:1229.60px;top:844.70px;font-size:11.2px;color:#e6e6e6;font-weight:normal;">1680</div>
<div class="r" style="left:1019px;top:862px;width:303px;height:1px;background:#2e2e2e;"></div>
<div class="t" style="left:1025.00px;top:870.70px;font-size:11.2px;color:#e6e6e6;font-weight:normal;">7</div>
<div class="t" style="left:1057.10px;top:870.70px;font-size:11.2px;color:#e6e6e6;font-weight:normal;">?</div>
<div class="t" style="left:1229.60px;top:870.70px;font-size:11.2px;color:#e6e6e6;font-weight:normal;">700</div>
<div class="r" style="left:1345px;top:652px;width:327px;height:248px;border:1px solid #363636;border-radius:4px;background:#171717;"></div>
<div class="r" style="left:1346px;top:688px;width:325px;height:1px;background:#363636;"></div>
<div class="r" style="left:1358px;top:658px;width:291px;height:25px;border:1px solid #3a3a3a;border-radius:4px;background:#161616;"></div>
<div class="t" style="left:1367.20px;top:664.70px;font-size:11.2px;color:#d8d8d8;font-weight:normal;">TCP-флаги</div>
<svg class="r" style="left:1636px;top:669px;width:7px;height:4px" viewBox="0 0 7 4"><path d="M0.5 0.5 L6.5 0.5 L3.5 3.5 Z" fill="#9a9a9a"/></svg>
<div class="r" style="left:1358px;top:700px;width:302px;height:25px;background:#1d1d1d;"></div>
<div class="t" style="left:1402.00px;top:706.86px;font-size:11px;color:#d2d2d2;font-weight:normal;-webkit-text-stroke:0.3px #d2d2d2;">TCP-флаги</div>
<div class="t" style="left:1551.50px;top:706.86px;font-size:11px;color:#d2d2d2;font-weight:normal;-webkit-text-stroke:0.3px #d2d2d2;">Пакеты</div>
<div class="t" style="left:1363.10px;top:731.70px;font-size:11.2px;color:#e6e6e6;font-weight:normal;">1</div>
<div class="t" style="left:1401.40px;top:731.70px;font-size:11.2px;color:#e6e6e6;font-weight:normal;">FIN</div>
<div class="t" style="left:1550.90px;top:731.70px;font-size:11.2px;color:#e6e6e6;font-weight:normal;">13.88k</div>
<div class="r" style="left:1358px;top:749px;width:302px;height:1px;background:#2e2e2e;"></div>
<div class="t" style="left:1363.10px;top:756.70px;font-size:11.2px;color:#e6e6e6;font-weight:normal;">2</div>
<div class="t" style="left:1401.40px;top:756.70px;font-size:11.2px;color:#e6e6e6;font-weight:normal;">SYN,FIN</div>
<div class="t" style="left:1550.90px;top:756.70px;font-size:11.2px;color:#e6e6e6;font-weight:normal;">5300</div>
<div class="r" style="left:1358px;top:774px;width:302px;height:1px;background:#2e2e2e;"></div>
<div class="t" style="left:1363.10px;top:781.70px;font-size:11.2px;color:#e6e6e6;font-weight:normal;">3</div>
<div class="t" style="left:1401.40px;top:781.70px;font-size:11.2px;color:#e6e6e6;font-weight:normal;">SYN</div>
<div class="t" style="left:1550.90px;top:781.70px;font-size:11.2px;color:#e6e6e6;font-weight:normal;">2247</div>
<div class="r" style="left:1358px;top:799px;width:302px;height:1px;background:#2e2e2e;"></div>
<div class="t" style="left:1363.10px;top:806.70px;font-size:11.2px;color:#e6e6e6;font-weight:normal;">4</div>
<div class="t" style="left:1401.40px;top:806.70px;font-size:11.2px;color:#e6e6e6;font-weight:normal;">RST,FIN</div>
<div class="t" style="left:1550.90px;top:806.70px;font-size:11.2px;color:#e6e6e6;font-weight:normal;">700</div>
</body></html>
